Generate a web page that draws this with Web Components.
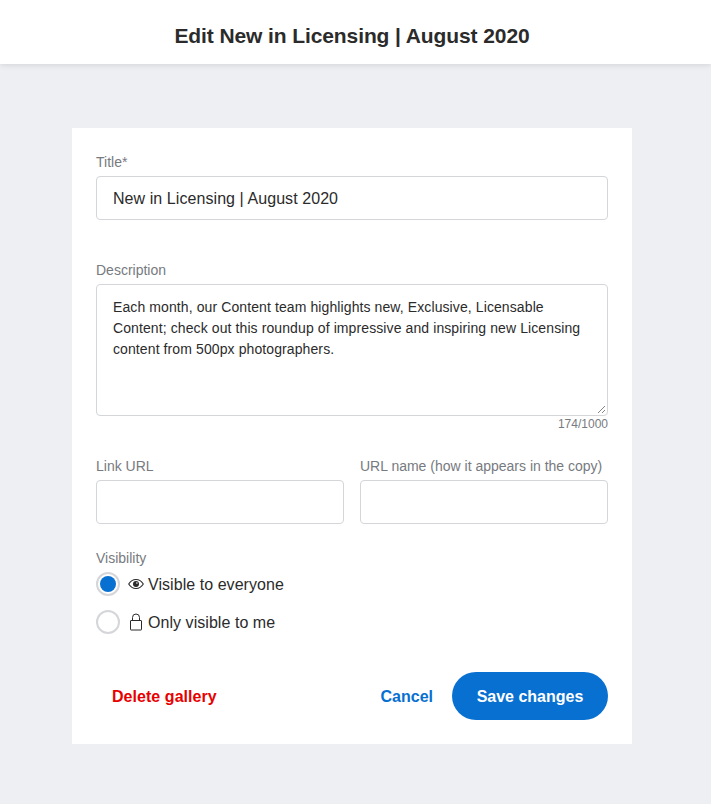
<!DOCTYPE html>
<html>
<head>
<meta charset="utf-8">
<title>Edit gallery</title>
<style>
html,body{margin:0;padding:0;}
body{background:#eeeff3;font-family:"Liberation Sans",Arial,sans-serif;color:#2b2b2b;}
</style>
</head>
<body>
<edit-page>
  <page-header slot="header">Edit New in Licensing | August 2020</page-header>
  <form-card>
    <text-field label="Title*" value="New in Licensing | August 2020" style="margin-bottom:40px"></text-field>
    <text-field label="Description" multiline counter="174/1000" value="Each month, our Content team highlights new, Exclusive, Licensable Content; check out this roundup of impressive and inspiring new Licensing content from 500px photographers." style="margin-bottom:25px"></text-field>
    <field-row>
      <text-field label="Link URL"></text-field>
      <text-field label="URL name (how it appears in the copy)"></text-field>
    </field-row>
    <visibility-group label="Visibility">
      <radio-option checked icon="eye">Visible to everyone</radio-option>
      <radio-option icon="lock">Only visible to me</radio-option>
    </visibility-group>
    <form-actions>
      <action-button kind="danger" slot="left">Delete gallery</action-button>
      <action-button kind="link">Cancel</action-button>
      <action-button kind="primary">Save changes</action-button>
    </form-actions>
  </form-card>
</edit-page>

<script>
class EditPage extends HTMLElement{
    constructor(){
        super();
        this.attachShadow({mode:'open'});
        this.shadowRoot.innerHTML=`
        <style>
        :host{display:block;min-height:804px;box-sizing:border-box;}
        main{display:flex;justify-content:center;padding:64px 7px 60px 0;}
        </style>
        <slot name="header"></slot>
        <main><slot></slot></main>`;
    }
}
class PageHeader extends HTMLElement{
    constructor(){
        super();
        this.attachShadow({mode:'open'});
        this.shadowRoot.innerHTML=`
        <style>
        :host{display:flex;align-items:center;justify-content:center;box-sizing:border-box;height:64px;padding:8px 7px 0 0;background:#fff;
            box-shadow:0 1px 6px rgba(0,0,0,.12);
            font:700 21px/28px "Liberation Sans",sans-serif;letter-spacing:-.1px;color:#2b2b2b;}
        </style>
        <slot></slot>`;
    }
}
class FormCard extends HTMLElement{
    constructor(){
        super();
        this.attachShadow({mode:'open'});
        this.shadowRoot.innerHTML=`
        <style>
        :host{display:block;width:560px;box-sizing:border-box;background:#fff;padding:24px;}
        </style>
        <slot></slot>`;
    }
}
class TextField extends HTMLElement{
    constructor(){
        super();
        this.attachShadow({mode:'open'});
    }
    connectedCallback(){
        const multi=this.hasAttribute('multiline');
        const counter=this.getAttribute('counter');
        this.shadowRoot.innerHTML=`
        <style>
        :host{display:block;min-width:0;}
        label{display:block;font-size:14px;line-height:20px;color:#777a80;margin-bottom:4px;white-space:nowrap;}
        .box{position:relative;box-sizing:border-box;border:1px solid #d5d6da;border-radius:4px;background:#fff;
            height:44px;padding:1px 16px 0;display:flex;align-items:center;font-size:16px;letter-spacing:.07px;color:#2b2b2b;}
        .box.multi{height:132px;align-items:flex-start;padding:12px 16px;font-size:14px;line-height:21px;letter-spacing:.1px;}
        svg{position:absolute;right:1px;bottom:1px;}
        .count{font-size:12px;line-height:14px;color:#777a80;text-align:right;margin-top:1px;}
        </style>
        <label></label>
        <div class="box ${multi?'multi':''}" role="textbox"><span class="val"></span>
        ${multi?`<svg width="9" height="9" viewBox="0 0 9 9"><path d="M1 8 8 1M5 8 8 5" stroke="#666" stroke-width=".8" fill="none"/></svg>`:''}
        </div>
        ${counter?`<div class="count"></div>`:''}`;
        this.shadowRoot.querySelector('label').textContent=this.getAttribute('label');
        this.shadowRoot.querySelector('.val').textContent=this.getAttribute('value')||'';
        if(counter){this.shadowRoot.querySelector('.count').textContent=counter;}
    }
}
class FieldRow extends HTMLElement{
    constructor(){
        super();
        this.attachShadow({mode:'open'});
        this.shadowRoot.innerHTML=`
        <style>
        :host{display:grid;grid-template-columns:248px 248px;column-gap:16px;margin-bottom:24px;}
        </style>
        <slot></slot>`;
    }
}
class VisibilityGroup extends HTMLElement{
    constructor(){
        super();
        this.attachShadow({mode:'open'});
    }
    connectedCallback(){
        this.shadowRoot.innerHTML=`
        <style>
        :host{display:block;margin-bottom:38px;}
        .label{font-size:14px;line-height:20px;color:#777a80;margin-bottom:4px;}
        .opts{display:flex;flex-direction:column;gap:14px;}
        </style>
        <div class="label"></div>
        <div class="opts"><slot></slot></div>`;
        this.shadowRoot.querySelector('.label').textContent=this.getAttribute('label');
    }
}
const radioIcons={
    eye:`<svg width="16" height="12" viewBox="0 0 16 12" fill="none" stroke="#2b2b2b" stroke-width="1.1"><path d="M.7 6C2.500 3 5 1.500 8 1.500S13.500 3 15.300 6C13.500 9 11 10.500 8 10.500S2.500 9 .7 6Z"/><circle cx="8" cy="6" r="3" fill="#2b2b2b" stroke="none"/><circle cx="8.900" cy="5" r=".8" fill="#fff" stroke="none"/></svg>`,
    lock:`<svg width="14" height="18" viewBox="0 0 14 18" fill="none" stroke="#2b2b2b" stroke-width="1"><rect x="1.500" y="7.500" width="11" height="9.500" rx=".5"/><path d="M3.500 7.500V4.500a3.500 3.500 0 0 1 7 0v3"/></svg>`
};
class RadioOption extends HTMLElement{
    constructor(){
        super();
        this.attachShadow({mode:'open'});
    }
    connectedCallback(){
        const on=this.hasAttribute('checked');
        this.shadowRoot.innerHTML=`
        <style>
        :host{display:flex;align-items:center;height:24px;font-size:16px;letter-spacing:.05px;color:#2b2b2b;}
        .dot{box-sizing:border-box;width:24px;height:24px;border-radius:50%;border:2px solid #d5d6da;background:#fff;
            display:flex;align-items:center;justify-content:center;margin-right:8px;}
        .dot i{display:block;width:16px;height:16px;border-radius:50%;background:#0870d1;}
        .ic{display:flex;width:16px;justify-content:center;margin-right:4px;}
        .txt{padding-top:1px;}
        </style>
        <span class="dot">${on?'<i></i>':''}</span>
        <span class="ic">${radioIcons[this.getAttribute('icon')]}</span>
        <span class="txt"><slot></slot></span>`;
    }
}
class FormActions extends HTMLElement{
    constructor(){
        super();
        this.attachShadow({mode:'open'});
        this.shadowRoot.innerHTML=`
        <style>
        :host{display:flex;align-items:center;gap:19px;}
        .left{margin-right:auto;padding-left:16px;}
        </style>
        <div class="left"><slot name="left"></slot></div>
        <slot></slot>`;
    }
}
class ActionButton extends HTMLElement{
    constructor(){
        super();
        this.attachShadow({mode:'open'});
        this.shadowRoot.innerHTML=`
        <style>
        :host{display:inline-flex;align-items:center;justify-content:center;box-sizing:border-box;padding-top:1px;font-size:16px;font-weight:700;cursor:pointer;height:48px;}
        :host([kind=danger]){color:#e80000;letter-spacing:.05px;}
        :host([kind=link]){color:#0870d1;}
        :host([kind=primary]){color:#fff;background:#0870d1;border-radius:24px;width:156px;}
        </style>
        <slot></slot>`;
    }
}
customElements.define('edit-page',EditPage);
customElements.define('page-header',PageHeader);
customElements.define('form-card',FormCard);
customElements.define('text-field',TextField);
customElements.define('field-row',FieldRow);
customElements.define('visibility-group',VisibilityGroup);
customElements.define('radio-option',RadioOption);
customElements.define('form-actions',FormActions);
customElements.define('action-button',ActionButton);
</script>
</body>
</html>
